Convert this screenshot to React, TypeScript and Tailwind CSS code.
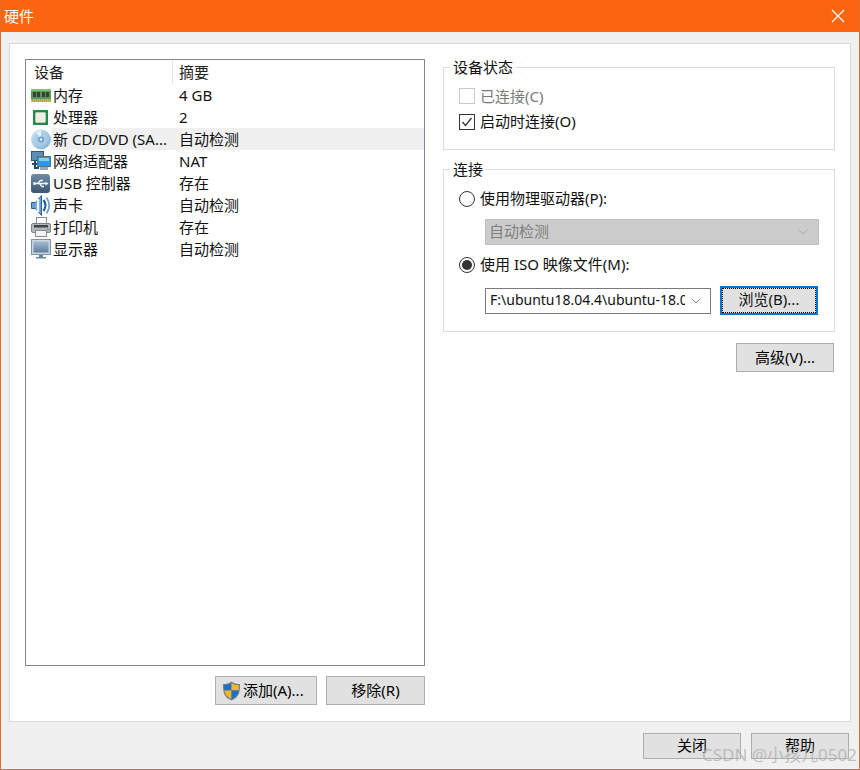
import { ChevronDown } from 'lucide-react';

const font = { fontFamily: '"Noto Sans", "Noto Sans CJK SC", sans-serif' };

function MemoryIcon() {
  return (
    <svg width="20" height="13" viewBox="0 0 20 13">
      <rect x="0" y="0" width="20" height="13" fill="#4f9d4f" />
      <rect x="0" y="0" width="20" height="2" fill="#7fc07a" />
      <rect x="2" y="3" width="3" height="5" fill="#3d3d35" />
      <rect x="6" y="3" width="3" height="5" fill="#3d3d35" />
      <rect x="11" y="3" width="3" height="5" fill="#3d3d35" />
      <rect x="15" y="3" width="3" height="5" fill="#3d3d35" />
      <path d="M0 11.500h20" stroke="#d9b84a" strokeWidth="3" strokeDasharray="1.500 0.500" />
    </svg>
  );
}

function CpuIcon() {
  return (
    <svg width="20" height="17" viewBox="0 0 20 17">
      <rect x="2" y="1" width="15" height="15" fill="#238a4a" />
      <rect x="4.500" y="3.500" width="10" height="10" rx="1" fill="#efefe8" stroke="#b7c8b5" />
    </svg>
  );
}

function DiscIcon() {
  return (
    <svg width="20" height="21" viewBox="0 0 20 21">
      <defs>
        <linearGradient id="discFill" x1="0" y1="0" x2="1" y2="1">
          <stop offset="0" stopColor="#cfe3f3" />
          <stop offset="1" stopColor="#7fb0d8" />
        </linearGradient>
      </defs>
      <circle cx="10" cy="10.500" r="10" fill="url(#discFill)" />
      <circle cx="10" cy="10.500" r="6.500" fill="#a9cbe6" />
      <path d="M10 10.500L5 3l5-1.500z" fill="#e6f1fa" />
      <circle cx="10" cy="10.500" r="3" fill="#6f9fc8" />
      <circle cx="10" cy="10.500" r="1.300" fill="#f4f8fb" />
    </svg>
  );
}

function NetworkIcon() {
  return (
    <svg width="20" height="20" viewBox="0 0 20 20">
      <rect x="0.500" y="0.500" width="12" height="9" fill="#5f8cb5" stroke="#2c5a85" />
      <path d="M4 10v7h4M1 13h6" stroke="#26496b" strokeWidth="2" fill="none" />
      <rect x="6.500" y="5.500" width="13" height="10" fill="#1f9ee6" stroke="#5a6d7c" />
      <rect x="8" y="7" width="10" height="3" fill="#7dd0f7" />
      <rect x="9" y="16" width="8" height="3" fill="#9aacb9" />
    </svg>
  );
}

function UsbIcon() {
  return (
    <svg width="19" height="19" viewBox="0 0 19 19">
      <defs>
        <linearGradient id="usbFill" x1="0" y1="0" x2="0" y2="1">
          <stop offset="0" stopColor="#728ca6" />
          <stop offset="1" stopColor="#3c5672" />
        </linearGradient>
      </defs>
      <rect width="19" height="19" rx="3" fill="url(#usbFill)" />
      <path d="M3 9.500h12M6.500 9.500l3-3h2.500M8.500 9.500l2.500 3h2" stroke="#f0f4f7" strokeWidth="1.300" fill="none" />
      <path d="M14.500 7.500l3 2-3 2z" fill="#f0f4f7" />
      <circle cx="3.500" cy="9.500" r="1.500" fill="#f0f4f7" />
    </svg>
  );
}

function SpeakerIcon() {
  return (
    <svg width="20" height="21" viewBox="0 0 20 21">
      <path d="M0.500 7.500h4l6-7v20l-6-7h-4z" fill="#6f9fd0" stroke="#2a5f9e" />
      <path d="M7 4v13" stroke="#eaf3fb" strokeWidth="2.500" />
      <path d="M12.500 5q4 5.500 0 11" stroke="#1f5fa8" strokeWidth="2.200" fill="none" />
      <path d="M15.500 2.500q5.500 8 0 16" stroke="#6f9fd0" strokeWidth="1.800" fill="none" />
    </svg>
  );
}

function PrinterIcon() {
  return (
    <svg width="20" height="20" viewBox="0 0 20 20">
      <rect x="5.500" y="0.500" width="10" height="7" fill="#fff" stroke="#8c8c8c" />
      <rect x="0.500" y="6.500" width="19" height="9" rx="1.500" fill="#b3b8be" stroke="#7b8188" />
      <rect x="3" y="8" width="14" height="2.500" fill="#3f4348" />
      <rect x="4.500" y="13.500" width="11" height="6" fill="#f4f4f4" stroke="#8c8c8c" />
      <rect x="16" y="12" width="2" height="1" fill="#3fa34d" />
    </svg>
  );
}

function MonitorIcon() {
  return (
    <svg width="20" height="20" viewBox="0 0 20 20">
      <defs>
        <linearGradient id="screenFill" x1="0" y1="0" x2="0" y2="1">
          <stop offset="0" stopColor="#a4bbcf" />
          <stop offset="1" stopColor="#5d7e9c" />
        </linearGradient>
      </defs>
      <rect x="0.500" y="0.500" width="19" height="15" fill="#c9d6e0" stroke="#7f93a6" />
      <rect x="2.500" y="2.500" width="15" height="11" fill="url(#screenFill)" />
      <path d="M8 16h4v2H8zM5 18h10v1.500H5z" fill="#6d8296" />
    </svg>
  );
}

function ShieldIcon() {
  return (
    <svg width="19" height="20" viewBox="0 0 19 20">
      <path d="M9.500 0.500C7 2.500 4 3 1 3c0 7 0 13 8.500 16.500C18 16 18 10 18 3c-3 0-6-.5-8.500-2.500z" fill="#6f7e8c" />
      <path d="M9.500 2C7.500 3.500 5 4.200 2.200 4.200c0 1.800 0 3.500.3 5.300h7z" fill="#1a6fd0" />
      <path d="M9.500 2v7.500h7c.3-1.800.3-3.500.3-5.300C14 4.200 11.500 3.500 9.500 2z" fill="#f7b923" />
      <path d="M2.500 9.500h7V18c-4.500-2-6.300-5-7-8.500z" fill="#f7b923" />
      <path d="M9.500 9.500h7c-.7 3.500-2.500 6.500-7 8.500z" fill="#1a6fd0" />
    </svg>
  );
}

const rows = [
  { icon: <MemoryIcon />, name: '内存', summary: '4 GB' },
  { icon: <CpuIcon />, name: '处理器', summary: '2' },
  { icon: <DiscIcon />, name: '新 CD/DVD (SA...', summary: '自动检测', selected: true },
  { icon: <NetworkIcon />, name: '网络适配器', summary: 'NAT' },
  { icon: <UsbIcon />, name: 'USB 控制器', summary: '存在' },
  { icon: <SpeakerIcon />, name: '声卡', summary: '自动检测' },
  { icon: <PrinterIcon />, name: '打印机', summary: '存在' },
  { icon: <MonitorIcon />, name: '显示器', summary: '自动检测' },
];

function Button({ children, className }: { children: React.ReactNode; className: string }) {
  return (
    <button className={`flex items-center bg-[#e1e1e1] border border-[#adadad] text-[15px] leading-[20px] text-black ${className}`}>
      {children}
    </button>
  );
}

function Radio({ checked }: { checked?: boolean }) {
  return (
    <span className="w-4 h-4 rounded-full border border-[#333] bg-white flex items-center justify-center shrink-0">
      {checked && <span className="w-[10px] h-[10px] rounded-full bg-[#333]" />}
    </span>
  );
}

function Legend({ children }: { children: React.ReactNode }) {
  return (
    <span className="absolute left-[6px] top-[-11px] bg-white px-[3px] text-[15px] leading-[20px] text-[#111]">
      {children}
    </span>
  );
}

export default function App() {
  return (
    <div style={font} className="w-[860px] h-[770px] bg-[#f0f0f0] flex flex-col border-x border-b border-[#e0702c] overflow-hidden relative">
      <div className="h-8 -mx-px bg-[#fb6510] flex items-center justify-between pl-[4px] pr-[15px] shrink-0">
        <span className="text-[15px] text-white leading-[20px]">硬件</span>
        <svg width="14" height="14" viewBox="0 0 14 14">
          <path d="M1 1l12 12M13 1L1 13" stroke="#fff" strokeWidth="1.200" />
        </svg>
      </div>

      <div className="mx-2 mt-[11px] h-[679px] bg-white border border-[#d9d9d9] flex pt-[15px] pl-[15px] shrink-0">
        <div className="w-[400px] shrink-0 flex flex-col">
          <div className="h-[607px] border border-[#828790] bg-white">
            <div className="h-6 flex text-[15px] leading-6 text-[#222]">
              <span className="w-[147px] pl-[8px] border-r border-[#e5e5e5]">设备</span>
              <span className="pl-[6px]">摘要</span>
            </div>
            {rows.map((row) => (
              <div key={row.name} className="h-[22px] flex items-center text-[15px] leading-[20px] text-[#111]">
                <span className="w-[25px] pl-[5px] shrink-0 flex items-center">{row.icon}</span>
                <div className={`flex-1 h-full flex items-center ${row.selected ? 'bg-[#f0f0f0]' : ''}`}>
                  <span className="w-[128px] pl-[2px] whitespace-nowrap">{row.name}</span>
                  <span>{row.summary}</span>
                </div>
              </div>
            ))}
          </div>
          <div className="flex justify-end gap-[9px] mt-[10px]">
            <Button className="w-[102px] h-[29px] gap-[2px] pl-[6px]">
              <ShieldIcon />
              <span className="pb-[2px]">添加(A)...</span>
            </Button>
            <Button className="w-[99px] h-[29px] justify-center pb-[2px]">移除(R)</Button>
          </div>
        </div>

        <div className="ml-[18px] w-[392px] shrink-0 flex flex-col pt-2 text-[15px] text-[#111]">
          <div className="relative h-[83px] border border-[#dcdcdc] pl-[15px] pt-[20px]">
            <Legend>设备状态</Legend>
            <div className="flex items-center gap-[5px] h-4 text-[#7a7a7a]">
              <span className="w-4 h-4 border border-[#c8c8c8] bg-white shrink-0" />
              <span className="leading-[20px]">已连接(C)</span>
            </div>
            <div className="flex items-center gap-[5px] h-4 mt-[10px]">
              <span className="w-4 h-4 border border-[#333] bg-white shrink-0 flex items-center justify-center">
                <svg width="12" height="12" viewBox="0 0 12 12">
                  <path d="M1.500 6l3 3.500L10.500 2" stroke="#333" strokeWidth="1.300" fill="none" />
                </svg>
              </span>
              <span className="leading-[20px] pb-[2px]">启动时连接(O)</span>
            </div>
          </div>

          <div className="relative h-[163px] mt-[19px] border border-[#dcdcdc] pl-[15px] pt-[21px]">
            <Legend>连接</Legend>
            <div className="flex items-center gap-[5px] h-4">
              <Radio />
              <span className="leading-[20px] pb-[2px]">使用物理驱动器(P):</span>
            </div>
            <div className="ml-[26px] mt-[12px] w-[334px] h-[26px] bg-[#cccccc] border border-[#bfbfbf] flex items-center justify-between pl-[3px] pr-[7px] text-[#7e7e7e]">
              <span className="leading-[20px] pb-[2px]">自动检测</span>
              <ChevronDown size={16} strokeWidth={1} color="#9a9a9a" />
            </div>
            <div className="flex items-center gap-[5px] h-4 mt-[12px]">
              <Radio checked />
              <span className="leading-[20px] pb-[2px]">使用 ISO 映像文件(M):</span>
            </div>
            <div className="flex items-center ml-[26px] mt-[13px]">
              <div className="w-[226px] h-[26px] bg-white border border-[#7a7a7a] flex items-center pl-[4px] pr-[6px]">
                <span className="w-[195px] overflow-hidden whitespace-nowrap leading-[24px] text-[14px] pb-[2px]">F:\ubuntu18.04.4\ubuntu-18.04.4-desktop</span>
                <ChevronDown size={16} strokeWidth={1} color="#444" className="ml-auto" />
              </div>
              <button className="ml-[9px] w-[98px] h-[29px] bg-[#e1e1e1] border-2 border-[#0078d7] flex items-center justify-center">
                <span className="w-full h-full border border-dotted border-black flex items-center justify-center leading-[20px] pb-[4px]">浏览(B)...</span>
              </button>
            </div>
          </div>

          <div className="flex justify-end mt-[11px] pr-px">
            <Button className="w-[98px] h-[29px] justify-center pb-[2px]">高级(V)...</Button>
          </div>
        </div>
      </div>

      <div className="flex justify-end gap-[10px] mt-[11px] pr-[10px]">
        <Button className="w-[98px] h-[26px] justify-center pb-[2px]">关闭</Button>
        <Button className="w-[98px] h-[26px] justify-center pb-[2px]">帮助</Button>
      </div>

      <span className="absolute right-[2px] bottom-[4px] text-[17px] leading-[20px] text-[#b0b0b0]/80 whitespace-nowrap">CSDN @小孩儿0502</span>
    </div>
  );
}
